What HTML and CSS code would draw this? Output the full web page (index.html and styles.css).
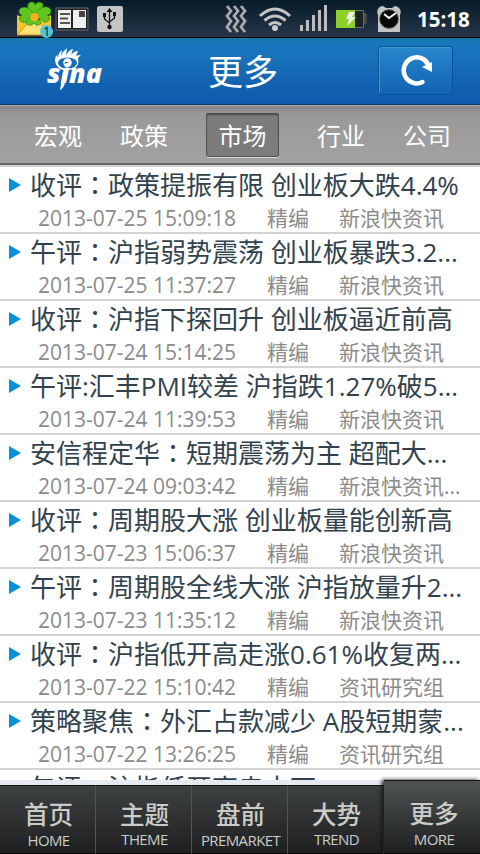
FILE: index.html
```html
<!DOCTYPE html>
<html lang="zh-CN">

<head>
    <meta charset="UTF-8">
    <title>新浪资讯</title>
    <link rel="stylesheet" href="styles.css">
</head>

<body>
    <div class="app">
        <div class="status-bar">
            <svg class="status-icons" width="130" height="37" viewBox="0 0 130 37">
                <path d="M17 15l17 7 17-7v20H17z" fill="#f5c72c" />
                <path d="M17 35l12-13h10l12 13z" fill="#ffe176" stroke="#c99413" />
                <g fill="#62c41e" stroke="#2f8d10" stroke-width=".7">
                    <path d="M34 15C25 9 27 2 32 2q3 0 3 3 2-4 7-2 4 4-8 12z" />
                    <path d="M34 15c6-10 16-10 17-4 0 3-2 4-4 4 5 3 2 8-3 7z" />
                    <path d="M34 15c-5-10-14-9-15-4 0 3 2 4 3 4-5 3-2 9 4 7z" />
                    <path d="M34 16c-9 3-10 8-5 9 3 1 4-1 5-2 2 4 7 2 7-1z" />
                </g>
                <circle cx="34.500" cy="17" r="4" fill="#ffad21" />
                <circle cx="46.500" cy="31.500" r="6.500" fill="#51c5e4" />
                <text class="badge-count" x="43" y="36">1</text>
                <path d="M56 8h32v22H56z" fill="#222" stroke="#666" />
                <path d="M58 10h13v18H58zM73 10h13v18H73z" fill="#eee" />
                <path d="M60 14h10M60 18.500h8M60 23h10" stroke="#555" stroke-width="2" />
                <path d="M79 11h6v6h-6z" fill="#444" />
                <rect x="97" y="6" width="26" height="26" rx="2" fill="#c5c5c5" />
                <g fill="none" stroke="#111" stroke-width="1.300">
                    <path d="M109.500 27V10M104.500 15v4l5 4M114.500 14v4l-5 4" />
                    <path d="M109.500 8l3 4h-6z" fill="#111" stroke="none" />
                    <circle cx="109.500" cy="27" r="2.200" fill="#111" stroke="none" />
                    <path d="M103 13h3v4h-3zM113 12h3v4h-3z" fill="#111" stroke="none" />
                </g>
            </svg>
            <div class="status-right">
                <svg class="status-icons" width="180" height="37" viewBox="224 0 180 37">
                    <g fill="none" stroke="#aaa" stroke-width="2.800">
                        <path d="M227 6l4 5-4 5 4 5-4 6 4 5M234 6l4 5-4 5 4 5-4 6 4 5M241 6l4 5-4 5 4 5-4 6 4 5" />
                    </g>
                    <g fill="none" stroke="#c4c4c4" stroke-width="3">
                        <path d="M260 16q15-14 30 0M264.500 20.500q10.500-9 21 0M269 25q6-5 12 0" />
                    </g>
                    <circle cx="275" cy="28" r="3" fill="#ccc" />
                    <path d="M300 25h3v6h-3zM306 20h3v11h-3zM312 15h3v16h-3zM318 10h3v21h-3zM324 5h3v26h-3z" fill="#bdbdbd" />
                    <path d="M336.500 10.500h27v17h-27zM364 14h2v9h-2z" fill="#1b2328" stroke="#68706a" />
                    <path d="M336 10h19v18h-19z" fill="#8fcf2a" />
                    <path d="M349 12h6l-3 5h4l-9 9 2-7h-3z" fill="#eee" />
                    <path d="M378 15c-2-5 1-9 5-9l3 2h6l3-2c5 1 7 5 5 9v17h-22z" fill="#c4c4c4" />
                    <circle cx="389" cy="19" r="9.500" fill="#080808" stroke="#777" />
                    <path d="M384 14l5 4 7-5" fill="none" stroke="#fff" stroke-width="1.800" />
                </svg>
                <span class="clock">15:18</span>
            </div>
        </div>

        <div class="header">
            <svg class="logo" width="60" height="44" viewBox="0 0 60 44">
                <path d="M12 18C9 13 10 9 12 7l1 3q0-5 4-8l-1 6q2-5 6-8l-1 7q3-5 7-6l-2 6q3-4 7-4l-2 5q2-1 5-1-3 2-3 4c2 7-4 11-10 11H18q-4-1-6-4z" fill="#fff" />
                <ellipse cx="22.500" cy="15" rx="9.500" ry="5.500" fill="#176cb7" />
                <circle cx="22.500" cy="14.500" r="4.300" fill="#fff" />
                <circle cx="21.500" cy="15.500" r="1.800" fill="#176cb7" />
                <text class="logo-text" x="2" y="35" textLength="55" lengthAdjust="spacingAndGlyphs">sina</text>
                <path d="M18 24h5l-4 14q-2 3-4 4z" fill="#fff" />
            </svg>
            <h1>更多</h1>
            <button class="refresh-button">
                <svg width="36" height="34" viewBox="0 0 36 34">
                    <path d="M23.500 29A13 13 0 1 1 29.500 12" fill="none" stroke="#fff" stroke-width="4.500" stroke-linecap="round" />
                    <path d="M23 14l10-5v10z" fill="#fff" />
                </svg>
            </button>
        </div>

        <div class="tabs">
            <a class="tab">宏观</a>
            <a class="tab">政策</a>
            <a class="tab active">市场</a>
            <a class="tab">行业</a>
            <a class="tab">公司</a>
        </div>

        <div class="news-list">
            <div class="news-item">
                <div class="news-title">收评<i lang="zh-TW">：</i>政策提振有限 创业板大跌4.4%</div>
                <div class="news-meta"><span class="time">2013-07-25 15:09:18</span><span class="type">精编</span><span>新浪快资讯</span></div>
            </div>
            <div class="news-item">
                <div class="news-title">午评<i lang="zh-TW">：</i>沪指弱势震荡 创业板暴跌3.2...</div>
                <div class="news-meta"><span class="time">2013-07-25 11:37:27</span><span class="type">精编</span><span>新浪快资讯</span></div>
            </div>
            <div class="news-item">
                <div class="news-title">收评<i lang="zh-TW">：</i>沪指下探回升 创业板逼近前高</div>
                <div class="news-meta"><span class="time">2013-07-24 15:14:25</span><span class="type">精编</span><span>新浪快资讯</span></div>
            </div>
            <div class="news-item">
                <div class="news-title">午评:汇丰PMI较差 沪指跌1.27%破5...</div>
                <div class="news-meta"><span class="time">2013-07-24 11:39:53</span><span class="type">精编</span><span>新浪快资讯</span></div>
            </div>
            <div class="news-item">
                <div class="news-title">安信程定华<i lang="zh-TW">：</i>短期震荡为主 超配大...</div>
                <div class="news-meta"><span class="time">2013-07-24 09:03:42</span><span class="type">精编</span><span>新浪快资讯...</span></div>
            </div>
            <div class="news-item">
                <div class="news-title">收评<i lang="zh-TW">：</i>周期股大涨 创业板量能创新高</div>
                <div class="news-meta"><span class="time">2013-07-23 15:06:37</span><span class="type">精编</span><span>新浪快资讯</span></div>
            </div>
            <div class="news-item">
                <div class="news-title">午评<i lang="zh-TW">：</i>周期股全线大涨 沪指放量升2...</div>
                <div class="news-meta"><span class="time">2013-07-23 11:35:12</span><span class="type">精编</span><span>新浪快资讯</span></div>
            </div>
            <div class="news-item">
                <div class="news-title">收评<i lang="zh-TW">：</i>沪指低开高走涨0.61%收复两...</div>
                <div class="news-meta"><span class="time">2013-07-22 15:10:42</span><span class="type">精编</span><span>资讯研究组</span></div>
            </div>
            <div class="news-item">
                <div class="news-title">策略聚焦<i lang="zh-TW">：</i>外汇占款减少 A股短期蒙...</div>
                <div class="news-meta"><span class="time">2013-07-22 13:26:25</span><span class="type">精编</span><span>资讯研究组</span></div>
            </div>
            <div class="news-item">
                <div class="news-title">午评<i lang="zh-TW">：</i>沪指低开高走大下</div>
            </div>
        </div>

        <div class="bottom-nav">
            <a class="nav-item"><b>首页</b><span>HOME</span></a>
            <a class="nav-item raised"><b>主题</b><span>THEME</span></a>
            <a class="nav-item"><b>盘前</b><span>PREMARKET</span></a>
            <a class="nav-item raised"><b>大势</b><span>TREND</span></a>
            <a class="nav-item current"><b>更多</b><span>MORE</span></a>
        </div>
    </div>
</body>

</html>
```
FILE: styles.css
```css
* {
    box-sizing: border-box;
}

body {
    margin: 0;
    font-family: "Open Sans", "Noto Sans CJK SC", sans-serif;
    background: #fff;
}

.app {
    display: flex;
    flex-direction: column;
    width: 480px;
    height: 854px;
    overflow: hidden;
}

.status-bar {
    position: relative;
    display: flex;
    justify-content: space-between;
    flex: none;
    height: 38px;
    background: linear-gradient(#061c29, #28354a);
    border-bottom: 1px solid #000;
}

.status-icons {
    display: block;
    overflow: visible;
}

.badge-count {
    font-size: 13px;
    fill: #111;
}

.status-right {
    display: flex;
    align-items: center;
}

.clock {
    width: 76px;
    padding-left: 13px;
    color: #fff;
    font: bold 20.5px "Open Sans", sans-serif;
}

.header {
    display: flex;
    align-items: center;
    justify-content: space-between;
    flex: none;
    height: 67px;
    padding: 0 27px 2px 45px;
    background: linear-gradient(#187aa8, #1877bf 5px, #1871ba 30%, #0e58ac);
    border-bottom: 1px solid #08396c;
}

.logo {
    width: 60px;
    height: 44px;
    overflow: visible;
}

.logo-text {
    font: italic 800 26px "Open Sans", sans-serif;
    fill: #fff;
}

.header h1 {
    margin: 4px 0 0 3px;
    color: #fff;
    font-size: 35px;
    font-weight: 400;
    line-height: 48px;
}

.refresh-button {
    display: flex;
    align-items: center;
    justify-content: center;
    width: 75px;
    height: 49px;
    padding: 0 0 0 4px;
    background: linear-gradient(#2887cc, #1262b3);
    border: 1px solid #0b5290;
    border-radius: 3px;
    box-shadow: inset 1px 1px #3ba0d4;
}

.tabs {
    display: flex;
    justify-content: space-between;
    flex: none;
    height: 60px;
    padding: 7px 29px 0 34px;
    background: linear-gradient(#858585, #999 8px, #a2a2a2);
    border-top: 1px solid #aaa;
    border-bottom: 2px solid #666;
}

.tab {
    width: 48px;
    height: 44px;
    color: #fff;
    font-size: 24px;
    line-height: 45px;
    text-align: center;
}

.tab.active {
    width: 73px;
    background: #7b7c7b;
    border-radius: 3px;
    box-shadow: inset 0 2px 2px #484848, inset 0 0 0 1px #555, 0 1px #ddd;
}

.news-list {
    flex: 1;
    overflow: hidden;
    border-top: 2px solid #d3d3d3;
}

.news-item {
    position: relative;
    height: 67px;
    padding-left: 30px;
    border-bottom: 2px solid #d3d3d3;
}

.news-item::before {
    content: "";
    position: absolute;
    left: 9px;
    top: 11px;
    border-left: 12px solid #0790da;
    border-top: 7px solid transparent;
    border-bottom: 7px solid transparent;
}

.news-title {
    height: 37px;
    color: #31424d;
    font-size: 26px;
    line-height: 37px;
    white-space: nowrap;
}

.news-title i {
    font-style: normal;
}

.news-meta {
    display: flex;
    padding-left: 8px;
    color: #8b8b8b;
    font-size: 21px;
    line-height: 28px;
    white-space: nowrap;
}

.time {
    width: 229px;
}

.type {
    width: 72px;
}

.bottom-nav {
    position: relative;
    display: flex;
    align-items: flex-end;
    flex: none;
    height: 74px;
    margin-top: -5px;
    background: linear-gradient(#e6e9ef 5px, #2b2e2f 5px);
}

.nav-item {
    display: flex;
    flex-direction: column;
    align-items: center;
    width: 96px;
    height: 69px;
    padding-top: 14px;
    padding-left: 2px;
    color: #cbcbc7;
    background: linear-gradient(#3e4142, #1d1f20);
    border-top: 1px solid #111;
    border-right: 1px solid #555;
    border-bottom: 1px solid #080808;
}

.nav-item b {
    font-size: 24.5px;
    font-weight: 500;
    line-height: 29px;
}

.nav-item span {
    font-family: "Open Sans", sans-serif;
    font-size: 15px;
    letter-spacing: -0.6px;
    line-height: 23px;
}

.nav-item.raised span {
    margin-top: -1px;
}

.nav-item.current {
    height: 74px;
    padding-top: 18px;
    padding-left: 4px;
    background: linear-gradient(#505354, #1d1f20);
    border-right: none;
    box-shadow: -2px 0 4px #111;
}
```
